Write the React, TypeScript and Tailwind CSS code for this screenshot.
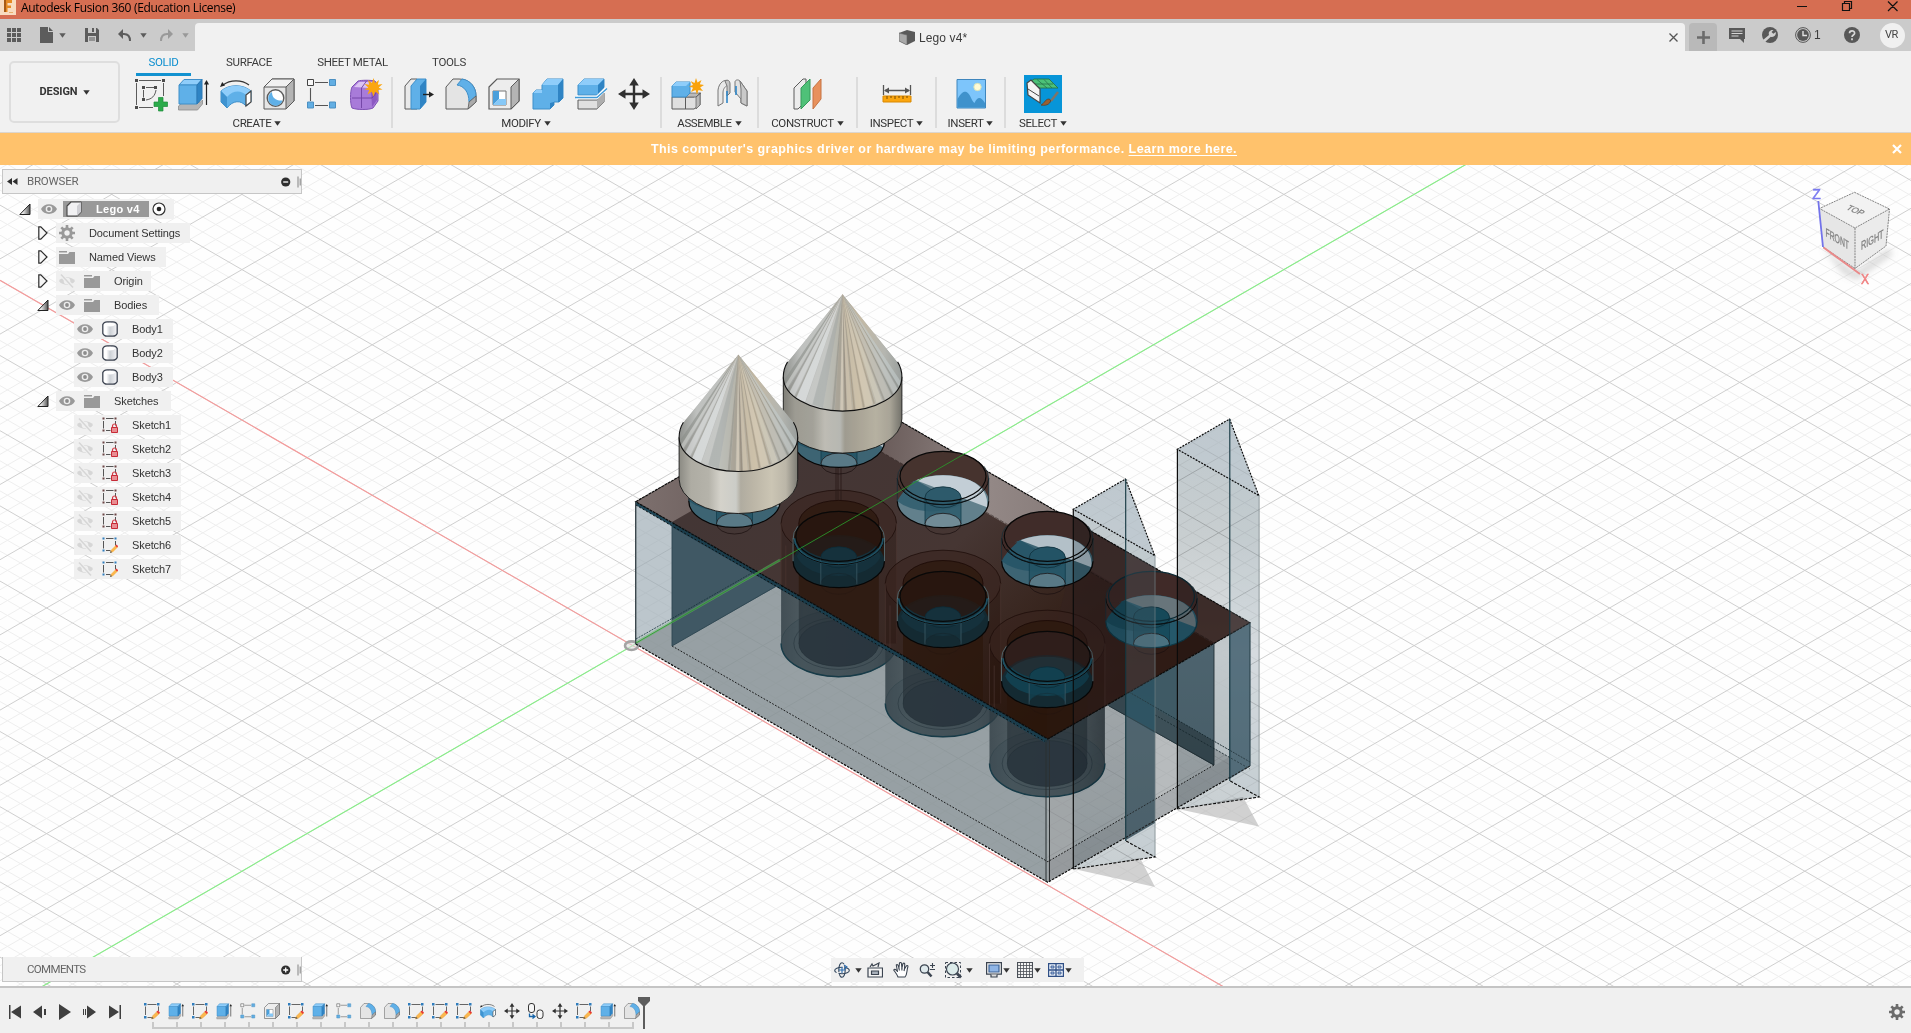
import React from "react";

/* ------------------------------------------------------------------ */
/* Shared small glyphs                                                  */
/* ------------------------------------------------------------------ */

function Caret({ className = "text-[#333]" }: { className?: string }) {
  return (
    <svg width="7" height="5" viewBox="0 0 7 5" className={className}>
      <path d="M0.3 0.3h6.4L3.5 4.8z" fill="currentColor" />
    </svg>
  );
}

type IconName =
  | "sketch" | "extrude" | "revolve" | "hole" | "pattern" | "form"
  | "presspull" | "fillet" | "shell" | "combine" | "split" | "move"
  | "component" | "joint" | "plane" | "measure" | "insert" | "select"
  | "editSketch" | "copy";

const INK = "#5b5b5b";

const ART: Record<IconName, React.ReactNode> = {
  sketch: (
    <g>
      <path d="M5 2.5h22M2.500 5v22M29.500 5v13M5 29.500h14" fill="none" stroke={INK} />
      <path d="M9.500 19.500V12M12 9.500h8M12 22c6-1 9-4 10-10" fill="none" stroke={INK} />
      <path d="M1 1h3v3H1zM28 1h3v3h-3zM1 28h3v3H1zM8 8h3v3H8zM20 8h3v3h-3zM8 20h3v3H8z" fill="#4c4c4c" />
      <path d="M24.5 19.5h4.500v4.500h4.500v4.500h-4.500v4.500h-4.500v-4.500h-4.500v-4.500h4.500z" fill="#2bab4b" stroke="#1d8c39" strokeWidth=".7" />
    </g>
  ),
  extrude: (
    <g>
      <path d="M1.5 28l5-4h17l2-2v4l-5 6h-19z" fill="#b5b5b5" stroke="#8d8d8d" strokeWidth=".8" />
      <path d="M2 7l5-5.500h18L20 7z" fill="#8fcdfa" stroke="#3f8fc9" />
      <path d="M2 7h18v19H2z" fill="#5fb0e8" stroke="#3f8fc9" />
      <path d="M20 7l5-5.500v19L20 26z" fill="#2f84c4" stroke="#2c79b5" />
      <path d="M29.5 27V5" stroke="#222" strokeWidth="1.2" />
      <path d="M27 6.5l2.500-4.500 2.500 4.500z" fill="#222" />
    </g>
  ),
  revolve: (
    <g>
      <path d="M3 7C10 1.5 22 1.5 29 7" fill="none" stroke="#333" strokeWidth="1.2" />
      <path d="M0 9l2.200-5 2.800 3.600z" fill="#222" />
      <path d="M1 13C9 6 23 6 31 13v11l-5 4c-5-6-13-6-19 2l-6-6z" fill="#5fb0e8" stroke="#3f8fc9" />
      <path d="M1 13C9 6 23 6 31 13l-5 4c-5-5-13-5-19 2z" fill="#8fcdfa" />
      <path d="M1 13l6 6v11l-6-6z" fill="#3f93d0" />
      <path d="M26 17l5-4v11l-5 4z" fill="#fff" stroke="#444" strokeWidth="1.2" />
    </g>
  ),
  hole: (
    <g>
      <path d="M1 9l8-8h22v22l-8 8H1z" fill="#e6e6e6" stroke={INK} />
      <path d="M23 9l8-8v22l-8 8z" fill="#b4b4b4" stroke={INK} />
      <path d="M1 9l8-8h22l-8 8z" fill="#f1f1f1" stroke={INK} />
      <circle cx="12.5" cy="20" r="8.3" fill="#fff" stroke={INK} strokeWidth="1.4" />
      <path d="M9 14c0 6 4 9 10.500 8.500A7.300 7.300 0 1 1 9 14z" fill="#5fb0e8" />
    </g>
  ),
  pattern: (
    <g>
      <path d="M9 4.5h13M4.500 10v13M9 27.500h13" stroke="#555" strokeWidth="1.1" />
      <path d="M1.5 1.5h6v6h-6z" fill="#f8f8f8" stroke="#444" />
      <path d="M23.5 1.5h6v6h-6zM1.500 24h6v6h-6zM23.500 24h6v6h-6z" fill="#62aee3" stroke="#4c90c2" />
    </g>
  ),
  form: (
    <g>
      <path d="M3 9l6-6c3-1 13-1 17 0l3 5v15l-5 7c-4 2-16 2-21 0-2-4-2-17 0-21z" fill="#a87bd9" stroke="#7e50b4" />
      <path d="M5 9l5-5h14l-4 6z" fill="#dcc4f3" />
      <path d="M22 11l5-6 1 17-5 7z" fill="#8c59c2" />
      <path d="M3 20h20l5-6M12.500 10v20M12.500 10l5-7" fill="none" stroke="#6f42a3" strokeWidth=".9" />
      <path d="M24.5 0l1.500 5 4-3-1.200 4.800 4.700-.8-3.800 3.500 3.800 2-4.700.6 1.700 4.400-4.300-2.700-1.700 4.700-1.700-4.700-4.300 2.700 1.700-4.400-4.700-.6 3.800-2-3.800-3.500 4.700.8L19 2l4 3z" fill="#fba60f" />
    </g>
  ),
  presspull: (
    <g>
      <path d="M3 8l6-7h6v30H3z" fill="#e9e9e9" stroke={INK} />
      <path d="M9 8l6-7h9v23l-6 7H9z" fill="#5fb0e8" stroke="#3f8fc9" />
      <path d="M18 8l6-7v23l-6 7z" fill="#2f84c4" />
      <path d="M21 16.5h7" stroke="#222" strokeWidth="1.4" />
      <path d="M27 13.5l5 3-5 3z" fill="#222" />
    </g>
  ),
  fillet: (
    <g>
      <path d="M1 31V9l7-8h6C24 1 31 8 31 18v6l-8 7z" fill="#e4e4e4" stroke={INK} />
      <path d="M12 7l5-6c8 1 14 8 14 17l-7 6c0-10-5-16-12-17z" fill="#5fb0e8" stroke="#3f8fc9" />
      <path d="M24 24l7-6v6l-8 7z" fill="#ababab" stroke={INK} strokeWidth=".8" />
    </g>
  ),
  shell: (
    <g>
      <path d="M1 9l8-8h22v22l-8 8H1z" fill="#ededed" stroke={INK} strokeWidth="1.2" />
      <path d="M23 9l8-8v22l-8 8z" fill="#b4b4b4" stroke={INK} />
      <path d="M5 13h13v14H5z" fill="#fff" stroke="#777" />
      <path d="M5 13h6v8l-6 6z" fill="#4a9fdb" />
      <path d="M5 27l6-6h7v6z" fill="#86c8f7" />
    </g>
  ),
  combine: (
    <g>
      <path d="M1 15l3-3h6V7l5-6h16v19l-4 4h-5v3l-4 4H1z" fill="#5fb0e8" stroke="#3f8fc9" />
      <path d="M10 7l5-6h16l-5 6zM1 15l3-3h6v3z" fill="#8fcdfa" />
      <path d="M26 7l5-6v19l-4 4h-1zM18 25l4-1v3l-4 4z" fill="#2f84c4" />
    </g>
  ),
  split: (
    <g>
      <path d="M3 22h19l7-7v9l-7 7H3z" fill="#e0e0e0" stroke={INK} />
      <path d="M22 22l7-7v9l-7 7z" fill="#aeaeae" />
      <path d="M3 7l6-6h20v10l-6 6H3z" fill="#5fb0e8" stroke="#3f8fc9" />
      <path d="M3 7l6-6h20l-6 6z" fill="#8fcdfa" />
      <path d="M23 7l6-6v10l-6 6z" fill="#2f84c4" />
      <path d="M1 19.500h21l9-9" fill="none" stroke="#fff" strokeWidth="3.5" />
      <path d="M0 19.500h22l10-9" fill="none" stroke="#3f9ad9" strokeWidth="1.4" />
    </g>
  ),
  move: (
    <g fill="#303030">
      <path d="M14.8 6h2.400v20h-2.400zM6 14.800h20v2.400H6z" />
      <path d="M16 0l4.800 7.500h-9.600zM16 32l-4.800-7.500h9.600zM0 16l7.500-4.800v9.600zM32 16l-7.500 4.800v-9.600z" />
    </g>
  ),
  component: (
    <g>
      <path d="M1 19h22l6-4v12l-6 4H1z" fill="#dfdfdf" stroke={INK} />
      <path d="M15 19l4-4h11l-5 4zM25 19l4-4v12l-4 4z" fill="#b9b9b9" stroke={INK} strokeWidth=".7" />
      <path d="M14.5 19v12" stroke={INK} />
      <path d="M1 8l4-4h14v11l-4 4H1z" fill="#5fb0e8" stroke="#3f8fc9" />
      <path d="M1 8l4-4h14l-4 4z" fill="#8fcdfa" />
      <path d="M25 0l1.500 4.500 4-2.500-1.700 4.200 4.200.8-3.800 2.500 2.800 3.500-4.500-1L26 16.500l-1.500-4.500-4.500 2 2-4.200-4-1.300 4-1.500-2.500-4 4 2z" fill="#f9a30d" />
    </g>
  ),
  joint: (
    <g stroke="#777">
      <path d="M2 28V12C3 4 9 1 12 3v4c-4 2-5 5-5 8v10z" fill="#e8e8e8" />
      <path d="M9 3c3-2 5 0 5 3v9l-3 3V8z" fill="#c6c6c6" />
      <path d="M31 28V13l-7-10c-2-2-5-1-5 1v10l6 7v4z" fill="#e2e2e2" />
      <path d="M24 3l7 10v15l-6-3V11z" fill="#c9c9c9" />
      <path d="M11 13v12M20 8v9" stroke="#2e86c8" strokeWidth="1.6" />
    </g>
  ),
  plane: (
    <g>
      <path d="M2 10l9-9h3v22l-8 8H2z" fill="#ececec" stroke={INK} />
      <path d="M9 10l9-9v21l-9 9z" fill="#4fc178" stroke="#37995a" />
      <path d="M21 10l8-9v20l-8 10z" fill="#e8915c" stroke="#c67343" />
    </g>
  ),
  measure: (
    <g>
      <path d="M2.5 7v10M29.500 7v10M4 12.500h24" stroke="#555" strokeWidth="1.3" fill="none" />
      <path d="M3 12.5l5-3v6zM29 12.500l-5-3v6z" fill="#555" />
      <path d="M2 18h28v6H2z" fill="#fba60f" stroke="#d98902" />
      <path d="M6 18v3M10 18v2M14 18v3M18 18v2M22 18v3M26 18v2" stroke="#7a4b00" />
    </g>
  ),
  insert: (
    <g>
      <path d="M2 1.5h28.500v28.500H2z" fill="#7dc5fb" stroke="#3f86bd" />
      <path d="M2.5 21c4-7 7-8 9-7 4 2 5 9 8 11 3-6 6-7 10.500 0v4.500H2.500z" fill="#3f92cc" />
      <circle cx="22.5" cy="9" r="3.7" fill="#fffbd5" stroke="#d5e2bb" />
    </g>
  ),
  select: (
    <g>
      <path d="M3 4l4-3h15l9 9H13z" fill="#4cc177" stroke="#27754a" strokeWidth=".9" />
      <path d="M10 1.5l10 8.500M17 1.500l8 8.500M8 6h18" stroke="#27754a" strokeWidth=".8" />
      <path d="M0 5l4-3 9 9v14L1 17z" fill="#f4f4f4" stroke="#444" strokeWidth="1.2" />
      <path d="M1 11l11 7" stroke="#444" />
      <path d="M31 14l-7 9" stroke="#7e7468" strokeWidth="2.4" />
      <path d="M14 27c3-1 4-6 8-6 4 1 0 8-8 6z" fill="#9a6032" stroke="#5d3a20" strokeWidth=".7" />
    </g>
  ),
  editSketch: (
    <g>
      <path d="M7 3h18M29 7v9M3 7v17M7 29h10" fill="none" stroke="#555" strokeWidth="1.8" />
      <path d="M0 0h5v5H0zM26 0h5v5h-5zM0 26h5v5H0z" fill="#2f7dbd" />
      <path d="M15 32l2-6 9-9 5 4-10 9z" fill="#fbb74e" stroke="#e89e35" />
      <path d="M25 17l3-2 4 4-3 3z" fill="#e53737" />
      <path d="M15 32l1.500-4 3 2.500z" fill="#555" />
    </g>
  ),
  copy: (
    <g fill="#f6f6f6" stroke="#333" strokeWidth="2">
      <rect x="1" y="1" width="12" height="18" rx="5" />
      <rect x="18" y="14" width="12" height="17" rx="5" />
      <path d="M3 21v6h10M9 23l5 4-5 4" fill="none" stroke="#1564a8" strokeWidth="2.6" />
    </g>
  ),
};

function Icon({ name, size = 32 }: { name: IconName; size?: number }) {
  return (
    <svg width={size} height={size} viewBox="0 0 32 32" className="block overflow-visible">
      {ART[name]}
    </svg>
  );
}

/* ------------------------------------------------------------------ */
/* Title bar and document tabs                                          */
/* ------------------------------------------------------------------ */

function TitleBar() {
  return (
    <div className="flex h-[19px] items-start justify-between bg-[#d66e52]">
      <div className="flex items-start">
        <svg width="16" height="15" viewBox="0 0 16 15">
          <path d="M0 0h16v15H0z" fill="#f8dcc0" />
          <path d="M4 0h8v3H7.500v2.500H11V8H7.500v4H4z" fill="#e58a24" />
          <path d="M4 0h2v12H4z" fill="#a85a14" />
          <path d="M9 12.5h4" stroke="#e9ae6d" />
        </svg>
        <span className="mt-[-1px] ml-[5px] font-['Open_Sans'] text-[12px] leading-[17px] tracking-[-0.32px] text-black">
          Autodesk Fusion 360 (Education License)
        </span>
      </div>
      <svg width="114" height="15" viewBox="0 0 114 15" fill="none" stroke="#111" strokeWidth="1.2">
        <path d="M0 6.5h10M45.500 3.500h7v7h-7zM47.500 3.500v-2h7v7h-2M91 1.500l9.500 9.500M100.500 1.500L91 11" />
      </svg>
    </div>
  );
}

function TabStrip() {
  return (
    <div className="flex h-8 bg-[#cbcbcb] pt-1">
      <div className="flex w-[195px] items-center pb-1 pl-[7px] text-[#5c5c5c]">
        <svg width="14" height="14" viewBox="0 0 14 14" fill="currentColor">
          <path d="M0 0h4v4H0zM5 0h4v4H5zM10 0h4v4h-4zM0 5h4v4H0zM5 5h4v4H5zM10 5h4v4h-4zM0 10h4v4H0zM5 10h4v4H5zM10 10h4v4h-4z" />
        </svg>
        <svg width="13" height="16" viewBox="0 0 13 16" className="ml-[19px]" fill="currentColor">
          <path d="M0 0h8v5h5v11H0zM9 0l4 4H9z" />
        </svg>
        <span className="ml-[6px]"><Caret className="text-[#5c5c5c]" /></span>
        <svg width="14" height="14" viewBox="0 0 14 14" className="ml-[19px]" fill="currentColor">
          <path fillRule="evenodd" d="M0 0h12l2 2v12H0zM3 0v5h8V0H9v4H7V0zM3 8v6h8V8zM4 9.500h6v1H4zM4 11.500h6v1H4z" />
        </svg>
        <svg width="13" height="13" viewBox="0 0 13 13" className="ml-[19px]" fill="none">
          <path d="M2 5h4c4 0 6 2.500 6 7" stroke="currentColor" strokeWidth="2" />
          <path d="M0 5l5-5v10z" fill="currentColor" />
        </svg>
        <span className="ml-[9px]"><Caret className="text-[#5c5c5c]" /></span>
        <svg width="13" height="13" viewBox="0 0 13 13" className="ml-[13px] text-[#999]" fill="none">
          <path d="M11 5H7C3 5 1 7.500 1 12" stroke="currentColor" strokeWidth="2" />
          <path d="M13 5L8 0v10z" fill="currentColor" />
        </svg>
        <span className="ml-[9px]"><Caret className="text-[#999]" /></span>
      </div>
      <div className="flex w-[1490px] items-center rounded-t bg-[#f1f1f1] pl-[704px]">
        <svg width="16" height="15" viewBox="0 0 16 15">
          <path d="M0 3l8-3 8 2v9l-8 4-8-4z" fill="#5a5a5a" />
          <path d="M0 3l8 2v10l-8-4z" fill="#a9a9a9" stroke="#666" strokeWidth=".6" />
        </svg>
        <span className="ml-1 flex-1 pt-px text-[12px] leading-4 tracking-[0.1px] text-[#3c3c3c]">Lego v4*</span>
        <svg width="9" height="9" viewBox="0 0 9 9" className="mr-[7px]" stroke="#555" strokeWidth="1.3">
          <path d="M.5.5l8 8M8.500.5l-8 8" />
        </svg>
      </div>
      <div className="ml-1 flex w-7 items-center justify-center rounded-t bg-[#b9b9b9]">
        <svg width="13" height="13" viewBox="0 0 13 13" stroke="#6c6c6c" strokeWidth="2.6"><path d="M6.5 0v13M0 6.500h13" /></svg>
      </div>
      <div className="flex flex-1 items-center pb-1 pl-3 text-[#585858]">
        <svg width="16" height="15" viewBox="0 0 16 15">
          <path d="M0 0h16v11h-1v4l-4-4H0z" fill="currentColor" />
          <path d="M2.5 3h11M2.500 5.500h11M2.500 8h7" stroke="#d4d4d4" />
        </svg>
        <svg width="16" height="16" viewBox="0 0 16 16" className="ml-[17px]">
          <circle cx="8" cy="8" r="8" fill="currentColor" />
          <path d="M1 13l6-5c-1-3 1-5.500 4.500-5L9.500 5l1.800 1.800L13.800 5c.5 3.500-2 5.500-5 4.700L3 15z" fill="#d0d0d0" />
        </svg>
        <svg width="16" height="16" viewBox="0 0 16 16" className="ml-[17px]">
          <circle cx="8" cy="8" r="7.4" fill="none" stroke="currentColor" />
          <circle cx="8" cy="8" r="5.9" fill="currentColor" />
          <path d="M8 4v4.500h4" fill="none" stroke="#e2e2e2" strokeWidth="1.4" />
        </svg>
        <span className="ml-[3px] w-[8px] text-[12px] leading-4 text-[#3d3d3d]">1</span>
        <svg width="16" height="16" viewBox="0 0 16 16" className="ml-[22px]">
          <circle cx="8" cy="8" r="8" fill="currentColor" />
          <path d="M5.5 6.300C5.500 3 10.600 3 10.600 6.200 10.600 8 8 8 8 10M8 11.300v2" fill="none" stroke="#d8d8d8" strokeWidth="1.7" />
        </svg>
        <span className="ml-5 flex size-[25px] items-center justify-center rounded-full bg-[#f0f0f0] pr-[2px] font-['Roboto'] text-[11px] tracking-[-0.5px] text-[#444]">VR</span>
      </div>
    </div>
  );
}

/* ------------------------------------------------------------------ */
/* Ribbon                                                               */
/* ------------------------------------------------------------------ */

function Group({ icons, label, width, last, step = "w-[43px]" }: { icons: IconName[]; label: string; width: string; last?: boolean; step?: string }) {
  return (
    <div className={`flex h-[51px] flex-col items-center ${width} ${last ? "" : "border-r-2 border-[#dcdcdc]"}`}>
      <div className="mt-[-2px] flex h-[38px] shrink-0 items-center">
        {icons.map((n) => (
          <div key={n} className={`flex justify-center ${step}`}>
            {n === "select" ? (
              <div className="flex size-[38px] items-center justify-center bg-[#0795d8]"><Icon name={n} /></div>
            ) : (
              <Icon name={n} />
            )}
          </div>
        ))}
      </div>
      <div className="mt-[3px] flex shrink-0 items-center gap-[3px] font-['Roboto'] text-[11.5px] leading-[14px] tracking-[-0.4px] text-[#333]">
        {label}
        <Caret />
      </div>
    </div>
  );
}

function Ribbon() {
  return (
    <div className="flex h-[82px] border-b border-[#dcd6cf] bg-[#f1f1f1] pl-[9px]">
      <div className="mt-[10px] flex h-[62px] w-[111px] items-center justify-center gap-[5px] rounded-[5px] border-2 border-[#dedede] font-['Roboto'] text-[11px] font-bold tracking-[-0.1px] text-[#333]">
        DESIGN
        <Caret />
      </div>
      <div className="flex flex-col">
        <div className="flex h-[26px] pl-4 font-['Roboto'] text-[11.5px] leading-[22px] tracking-[-0.35px] text-[#3c3c3c]">
          <div className="h-[25px] w-[55px] border-b-[3px] border-[#1292d0] text-center text-[#0e8fcf]">SOLID</div>
          <div className="w-[116px] text-center">SURFACE</div>
          <div className="w-[91px] text-center">SHEET METAL</div>
          <div className="w-[102px] text-center">TOOLS</div>
        </div>
        <div className="flex">
          <Group width="w-[273px] pl-[3px]" label="CREATE" icons={["sketch", "extrude", "revolve", "hole", "pattern", "form"]} />
          <Group width="w-[269px] pr-[1px]" label="MODIFY" icons={["presspull", "fillet", "shell", "combine", "split", "move"]} step="w-[43.4px]" />
          <Group width="w-[97px]" label="ASSEMBLE" icons={["component", "joint"]} step="w-[45px]" />
          <Group width="w-[99px]" label="CONSTRUCT" icons={["plane"]} />
          <Group width="w-[79px]" label="INSPECT" icons={["measure"]} />
          <Group width="w-[69px]" label="INSERT" icons={["insert"]} />
          <Group width="w-[74px]" label="SELECT" icons={["select"]} last />
        </div>
      </div>
    </div>
  );
}

function Banner() {
  return (
    <div className="flex h-8 items-center bg-[#ffc26c] text-white">
      <div className="w-[1888px] text-center text-[12.5px] font-bold tracking-[0.44px]">
        This computer's graphics driver or hardware may be limiting performance.{" "}
        <span className="underline underline-offset-2">Learn more here.</span>
      </div>
      <svg width="10" height="10" viewBox="0 0 10 10" className="ml-[4px]" stroke="#fff" strokeWidth="2.2"><path d="M1 1l8 8M9 1L1 9" /></svg>
    </div>
  );
}

/* ------------------------------------------------------------------ */
/* 3D viewport drawing, in window coordinates                           */
/* ------------------------------------------------------------------ */

const K = 0.5774;
const OX = 632.6;
const OY = 645.6;

function gridPath(major: boolean) {
  let d = "";
  for (let n = -150; n <= 150; n++) {
    if ((n % 5 === 0) !== major) continue;
    const off = n * 15.04;
    const a = OY + off - K * OX;
    const b = OY + off + K * OX;
    d += `M0 ${a.toFixed(1)}L1911 ${(a + K * 1911).toFixed(1)}M0 ${b.toFixed(1)}L1911 ${(b - K * 1911).toFixed(1)}`;
  }
  return d;
}

function Tube({ cx, cy }: { cx: number; cy: number }) {
  const b = cy + 120;
  return (
    <g>
      <path d={`M${cx - 57.7} ${cy}V${b}A57.7 33.3 0 0 0 ${cx + 57.7} ${b}V${cy}z`} fill="url(#tubeWall)" />
      <ellipse cx={cx} cy={b} rx="57.7" ry="33.3" fill="#3a4a52" fillOpacity=".35" stroke="#22363e" strokeOpacity=".4" strokeWidth=".7" />
      <ellipse cx={cx} cy={b} rx="45" ry="26" fill="none" stroke="#22303a" strokeOpacity=".7" strokeWidth=".7" />
      <path d={`M${cx - 40} ${cy}V${b}A40 23 0 0 0 ${cx + 40} ${b}V${cy}z`} fill="#232d33" fillOpacity=".6" />
      <ellipse cx={cx} cy={b} rx="40" ry="23" fill="#25323b" fillOpacity=".5" stroke="#1b272e" strokeOpacity=".5" strokeWidth=".6" />
      <path d={`M${cx - 57.7} ${b}A57.7 33.3 0 0 0 ${cx + 57.7} ${b}`} fill="none" stroke="#173b48" strokeWidth="1.4" />
    </g>
  );
}

function TubeShade({ cx, cy }: { cx: number; cy: number }) {
  return (
    <g>
      <path d={`M${cx - 57.7} ${cy}A57.7 33.3 0 0 1 ${cx + 57.7} ${cy}V${cy + 120}H${cx - 57.7}z`} fill="#230f08" fillOpacity=".32" />
      <ellipse cx={cx} cy={cy} rx="57.7" ry="33.3" fill="#442e29" fillOpacity=".4" stroke="#200f0b" strokeWidth=".8" />
      <path d={`M${cx - 40} ${cy}A40 23 0 0 1 ${cx + 40} ${cy}V${cy + 120}H${cx - 40}z`} fill="#2b170c" fillOpacity=".7" />
      <ellipse cx={cx} cy={cy} rx="40" ry="23" fill="none" stroke="#1a0905" strokeWidth=".8" />
      <path d={`M${cx - 57.7} ${cy}V${cy + 120}M${cx + 57.7} ${cy}V${cy + 120}M${cx - 53} ${cy + 22}V${cy + 120}`} stroke="#4a3530" strokeWidth=".7" fill="none" />
    </g>
  );
}

function Stud({ cx, cy, kind }: { cx: number; cy: number; kind: "light" | "mixed" | "teal" | "dark" | "darkTeal" }) {
  const t = cy - 25;
  const body = { light: "#62808c", mixed: "#3d6473", teal: "#25586a", dark: "#142a32", darkTeal: "#142a32" }[kind];
  const floor = { light: "#2d5a6b", mixed: "#235365", teal: "#164959", dark: "#15313c", darkTeal: "#12404f" }[kind];
  const sheen = { light: "#c3ced6", mixed: "#b3c0c8", teal: "#68757b", dark: "", darkTeal: "" }[kind];
  const top = { light: "#46332f", mixed: "#402c29", teal: "#402a28", dark: "#28170f", darkTeal: "#2f1e1b" }[kind];
  const back = kind === "light" || kind === "mixed" || kind === "teal";
  return (
    <g>
      <path d={`M${cx - 45.7} ${t + 2}V${cy}A45.7 26.4 0 0 0 ${cx + 45.7} ${cy}V${t + 2}A43 25 0 0 0 ${cx - 45.7} ${t + 2}z`} fill={top} />
      <ellipse cx={cx} cy={t} rx="43" ry="25" fill={top} fillOpacity=".9" />
      <path d={`M${cx - 45.7} ${cy}A45.7 26.4 0 0 1 ${cx + 45.7} ${cy}A45.7 26.4 0 0 1 ${cx - 45.7} ${cy}z`} fill={body} />
      {back && (
        <g>
          <path d={`M${cx - 27} ${cy - 21}Q${cx} ${cy - 31} ${cx + 27} ${cy - 21}Q${cx + 46} ${cy - 12} ${cx + 44} ${cy + 6}z`} fill={sheen} />
          <path d={`M${cx - 45.7} ${cy}A45.7 26.4 0 0 1 ${cx - 27} ${cy - 21}L${cx + 17} ${cy + 4}A43 25 0 0 1 ${cx - 45.7} ${cy}z`} fill={floor} fillOpacity=".8" />
          <path d={`M${cx - 45.7} ${t + 7}L${cx - 45.7} ${cy}Q${cx - 43} ${t + 18} ${cx - 30} ${cy - 19}z`} fill={top} />
        </g>
      )}
      {!back && (
        <path d={`M${cx - 42} ${cy - 5}A43 25 0 0 1 ${cx + 42} ${cy - 5}A43 25 0 0 1 ${cx - 42} ${cy - 5}z`} fill={floor} />
      )}
      {!back && <ellipse cx={cx} cy={t - 1} rx="41.5" ry="24" fill={top} fillOpacity={kind === "dark" ? ".8" : ".5"} />}
      <path d={`M${cx - 18} ${cy - 4}A18 10.5 0 0 1 ${cx + 18} ${cy - 4}V${cy + 23}A18 10.5 0 0 0 ${cx - 18} ${cy + 23}z`} fill={floor} fillOpacity=".85" />
      <path d={`M${cx - 18} ${cy - 4}V${cy + 23}M${cx + 18} ${cy - 4}V${cy + 23}`} stroke={back ? "#123c4b" : "#3c5a64"} strokeWidth=".8" />
      <ellipse cx={cx} cy={cy - 4} rx="18" ry="10.5" fill={floor} stroke="#0c2a35" strokeWidth=".7" />
      <path d={`M${cx - 18} ${cy + 22.5}A18 10.5 0 0 1 ${cx + 18} ${cy + 22.5}Q${cx} ${cy + 30} ${cx - 18} ${cy + 22.5}z`} fill={back ? "#8fa0a8" : "none"} fillOpacity=".35" />
      <ellipse cx={cx} cy={cy + 22.5} rx="18" ry="10.5" fill="none" stroke={back ? "#1b1010" : "#17100e"} strokeOpacity={back ? 0.9 : 0.25} strokeWidth=".8" />
      {!back && (
        <path d={`M${cx - 44.5} ${t + 2}A44.5 26 0 0 0 ${cx + 44.5} ${t + 2}`} fill="none" stroke="#1e5062" strokeWidth="2.4" />
      )}
      <ellipse cx={cx} cy={t} rx="43" ry="25" fill="none" stroke={kind === "teal" ? "#0d2b35" : "#080808"} strokeWidth="1.2" />
      <path d={`M${cx - 45.7} ${t + 2}A45.7 26.4 0 0 0 ${cx + 45.7} ${t + 2}`} fill="none" stroke="#0a0a0a" strokeWidth="1" />
      {back && <path d={`M${cx - 40} ${t + 13}A43 24 0 0 0 ${cx + 40} ${t + 13}`} fill="none" stroke="#0a1418" strokeWidth=".8" />}
      <path d={`M${cx - 45.7} ${t + 3}Q${cx - 46} ${t - 4} ${cx - 41} ${t - 10}M${cx + 45.7} ${t + 3}Q${cx + 46} ${t - 4} ${cx + 41} ${t - 10}M${cx - 45.7} ${t + 2}V${cy}M${cx + 45.7} ${t + 2}V${cy}`} fill="none" stroke={back ? "#1a3038" : "#5c7880"} strokeWidth=".8" />
      <path d={`M${cx - 45.7} ${cy}A45.7 26.4 0 0 0 ${cx + 45.7} ${cy}`} fill="none" stroke={kind === "teal" ? "#0e3a48" : "#060606"} strokeWidth="1.2" />
    </g>
  );
}

/* Radial streaks: position across the base, half-width, colour */
const STREAKS: [number, number, string][] = [
  [-0.96, 0.05, "#8b8d88"], [-0.88, 0.04, "#c9cbc8"], [-0.8, 0.02, "#8f908b"], [-0.72, 0.05, "#d8dbda"],
  [-0.64, 0.015, "#9b9b94"], [-0.56, 0.07, "#e4e8ea"], [-0.43, 0.05, "#c9cbc9"], [-0.32, 0.07, "#a9aeab"],
  [-0.2, 0.05, "#b9bab3"], [-0.12, 0.015, "#93928a"], [-0.07, 0.03, "#a39d90"], [-0.01, 0.02, "#e3d9c6"],
  [0.04, 0.012, "#8b7f71"], [0.09, 0.03, "#d5c8b2"], [0.15, 0.01, "#9f917d"], [0.21, 0.04, "#d3c6ae"],
  [0.27, 0.01, "#a09480"], [0.34, 0.05, "#dcd1bb"], [0.41, 0.01, "#a19884"], [0.48, 0.04, "#d6d0c0"],
  [0.55, 0.012, "#98958a"], [0.62, 0.05, "#c3c2b9"], [0.7, 0.012, "#83857f"], [0.78, 0.05, "#c4c9c8"],
  [0.86, 0.015, "#8d9290"], [0.93, 0.05, "#c3cbcc"],
];

function Cone({ cx, cy, id, shade }: { cx: number; cy: number; id: string; shade: number }) {
  const apex = cy - 83;
  const outline = `M${cx} ${apex}L${cx - 55} ${cy - 15}Q${cx - 59.3} ${cy - 8} ${cx - 59.3} ${cy}A59.3 34.2 0 0 0 ${cx + 59.3} ${cy}Q${cx + 59.3} ${cy - 8} ${cx + 55} ${cy - 15}z`;
  const barrel = `M${cx - 59.3} ${cy}V${cy + 42}A59.3 34.2 0 0 0 ${cx + 59.3} ${cy + 42}V${cy}z`;
  return (
    <g>
      <path d={barrel} fill="url(#metal)" stroke="#161616" strokeWidth=".9" />
      <path d={barrel} fill="#3a3833" fillOpacity={shade} />
      <clipPath id={id}><path d={outline} /></clipPath>
      <g clipPath={`url(#${id})`}>
        <path d={outline} fill="url(#coneBase)" />
        {STREAKS.map(([f, w, c]) => {
          const r = 76;
          const x1 = cx + Math.sin((f - w) * 1.05) * r;
          const x2 = cx + Math.sin((f + w) * 1.05) * r;
          const yb = (x: number) => cy + 38 - Math.abs(x - cx) * 0.35;
          return <path key={f} d={`M${cx} ${apex}L${x1} ${yb(x1)}L${x2} ${yb(x2)}z`} fill={c} fillOpacity=".6" />;
        })}
      </g>
      <path d={`M${cx - 55} ${cy - 15}Q${cx - 59.3} ${cy - 8} ${cx - 59.3} ${cy}A59.3 34.2 0 0 0 ${cx + 59.3} ${cy}Q${cx + 59.3} ${cy - 8} ${cx + 55} ${cy - 15}`} fill="none" stroke="#111" strokeWidth="1.1" />
    </g>
  );
}

function Prism({ dx, dy }: { dx: number; dy: number }) {
  return (
    <g transform={`translate(${dx} ${dy})`}>
      <g className="mix-blend-multiply">
        <path d="M1073.3 509.3L1125.5 479L1154.7 555.5V857L1073.3 869z" fill="url(#prism)" />
      </g>
      <path d="M1125.5 479L1154.7 555.5V857L1126 841z" fill="#a9bfca" fillOpacity=".14" />
      <path d="M1073.3 509.3L1125.5 479L1154.7 555.5z" fill="#c0c9d2" fillOpacity=".5" />
      <g fill="none" stroke="#0b0b0b">
        <path d="M1154.7 555.5L1125.5 479L1073.3 509.3L1154.7 555.5" strokeWidth="1.2" strokeDasharray="2 1.2" />
        <path d="M1073.3 509.3V869" strokeWidth="1.2" />
        <path d="M1125.7 479V841" stroke="#12353f" strokeWidth="1.1" />
        <path d="M1155 555V857" stroke="#6d7b80" strokeWidth=".8" />
        <path d="M1073.3 869L1155 857L1126 841" strokeWidth="1.1" strokeDasharray="3 1.5" />
      </g>
    </g>
  );
}

function Brick() {
  return (
    <g>
      {/* cast shadows */}
      <path d="M1074 869L1155 887L1140 858z" fill="#b9b9b9" fillOpacity=".65" />
      <path d="M1178 809L1259 826.5L1243 797z" fill="#b9b9b9" fillOpacity=".65" />

      {/* front face and the floor behind it */}
      <path d="M635.7 501.7L1047.8 739V882.3L635.7 644z" fill="#9aa8b2" fillOpacity=".66" />
      <path d="M635.7 644L672 623V645L780 584L1047.8 739V882.3z" fill="#7c8587" fillOpacity=".58" />
      <path d="M672 522L780 584.5L672 646z" fill="#405864" />

      {/* right face, inner walls and rim */}
      <path d="M1047.8 739L1250 622.7V766L1047.8 882.3z" fill="#92989b" fillOpacity=".66" />
      <path d="M1047.8 861.7L1250 745V766L1047.8 882.3z" fill="#6c7376" fillOpacity=".2" />
      <path d="M1047.8 739L1074 724V867L1047.8 882.3z" fill="#555b5e" fillOpacity=".22" />
      <path d="M1107 705L1214 643.5V765.5z" fill="#58707b" />
      <path d="M1107 705L1129 692L1214 741.5V765.5z" fill="#3d5058" />
      <path d="M1214 643L1229.5 634V757L1214 748z" fill="#eef1f3" fillOpacity=".75" />
      <path d="M1229.5 634L1250 622.7V766L1229.5 779z" fill="#557280" />
      <path d="M1126 694L1155 677V823L1126 840z" fill="#4b626c" />
      <path d="M1126 694L1155 677V733L1126 716z" fill="#1f4c5c" />
      <path d="M1155 677L1177.3 664.5V721L1155 708z" fill="#3f5a65" />

      {/* tubes under the deck */}
      <Tube cx={838.8} cy={523.4} />
      <Tube cx={943} cy={583.5} />
      <Tube cx={1047.2} cy={643.5} />

      {/* deck */}
      <clipPath id="deck"><path d="M635.7 501.7L837.9 385.4L1250 622.7L1047.8 739z" /></clipPath>
      <g clipPath="url(#deck)">
        <path d="M600 380h700v380H600z" fill="url(#deckFill)" />
        <path d="M635.7 501.7L837.9 385.4L1073 520.8V563L838 427L672 522z" fill="url(#deckEdge)" />
        <path d="M1073 520L1250 622.7L1214 644L1073 562z" fill="#4e3836" fillOpacity=".85" />
        <path d="M1073 560L1214 643L1047 739V660z" fill="#34211f" fillOpacity=".5" />
        <TubeShade cx={838.8} cy={523.4} />
        <TubeShade cx={943} cy={583.5} />
        <TubeShade cx={1047.2} cy={643.5} />
        <path d="M1074 500h81V760h-81z" fill="#452c2a" fillOpacity=".3" />
        <path d="M838 427V500M841 429V500M836 427V500" stroke="#2a1b19" strokeWidth=".9" />
        <path d="M838 427L1214 643" stroke="#1d1211" strokeWidth=".7" strokeOpacity=".7" strokeDasharray="4 1.5" />
      </g>

      {/* hem along the front top edge */}
      <path d="M635.7 501.7L1047.8 739L1045 742.5L635.7 505z" fill="#1f4657" />
      <path d="M672 522L1047 739V742.5L672 527z" fill="#193c4b" fillOpacity=".9" />

      {/* edges */}
      <g fill="none" stroke="#0c0c0c" strokeWidth="1.2">
        <path d="M635.7 501.7L837.9 385.4L1250 622.7L1047.8 739z" strokeDasharray="3 .7" />
        <path d="M635.7 505L1045 741.5" strokeDasharray="2 2" strokeWidth=".9" />
        <path d="M635.7 501.7V644" strokeWidth="1.4" stroke="#3b474d" />
        <path d="M635.7 644L1047.8 882.3L1250 766" strokeDasharray="2.5 1.2" />
        <path d="M1046 740V882M1049.5 740V881" stroke="#2b3032" strokeWidth="1" />
        <path d="M672 646L1047.8 861.7L1214 765" strokeWidth=".9" strokeDasharray="1.8 1.5" />
        <path d="M1109 706L1214 765V643" stroke="#26343a" strokeWidth=".9" />
        <path d="M672 522V646L780 584" stroke="#2c4550" strokeWidth=".9" />
        <path d="M1129 692L1250 762" stroke="#16292f" strokeWidth=".9" strokeDasharray="2 1" />
        <path d="M1155 715L1250 769" stroke="#16292f" strokeWidth=".8" strokeDasharray="2 1.5" />
        <path d="M1250 622.7V766" stroke="#1d3943" />
      </g>

      <Stud cx={839} cy={441} kind="mixed" />
      <Stud cx={734.5} cy={501} kind="mixed" />
      <Stud cx={943} cy={501.3} kind="light" />
      <Stud cx={1047.3} cy={561.3} kind="mixed" />
      <Stud cx={1151.5} cy={621.3} kind="teal" />
      <Stud cx={838.8} cy={561.3} kind="dark" />
      <Stud cx={943} cy={621.3} kind="dark" />
      <Stud cx={1047.2} cy={681.3} kind="darkTeal" />

      {/* green axis seen through the body */}
      <path d="M636 642.500L780 560" stroke="#69b06c" strokeWidth="2.6" strokeOpacity=".5" />
      <path d="M636 639L757 570" stroke="#17343a" strokeWidth=".8" strokeDasharray="2 1" />
      <path d="M636 643L965 453.500" stroke="#2a9a2b" strokeWidth="1" strokeOpacity=".85" />

      <Cone cx={842.6} cy={376.9} id="coneB" shade={0.14} />
      <Cone cx={738.4} cy={437.3} id="coneA" shade={0} />

      <Prism dx={0} dy={0} />
      <Prism dx={104.1} dy={-60} />
    </g>
  );
}

function ViewCube() {
  return (
    <g>
      <path d="M1822 247l33 25 34-24 4 6-36 26-14-6z" fill="#888" fillOpacity=".3" filter="url(#soft)" />
      <path d="M1854.5 192.3L1889.5 209L1855 228L1819.5 208.5z" fill="#f2f2f2" />
      <path d="M1819.5 208.5L1855 228V268.5L1823 247z" fill="#e6e6e6" />
      <path d="M1855 228L1889.5 209L1886 246L1855 268.5z" fill="#ebebeb" />
      <path d="M1854.5 192.3L1889.5 209L1855 228L1819.5 208.5zM1855 228V268.5L1886 246L1889.5 209M1855 268.5L1823 247" fill="none" stroke="#777" strokeWidth=".9" strokeDasharray="2 .8" />
      <g fontFamily="Liberation Sans" fill="#808080" stroke="#808080" strokeWidth=".3">
        <text fontSize="11" transform="matrix(.7 .3 -.6 .55 1845.5 209)">TOP</text>
        <text fontSize="11" transform="matrix(.62 .36 0 1.08 1825.5 236)">FRONT</text>
        <text fontSize="11" transform="matrix(.66 -.36 0 1.08 1861 250)">RIGHT</text>
      </g>
      <path d="M1818.3 201L1823 247" stroke="#7373ea" strokeWidth="1.8" />
      <path d="M1823.5 247.5L1860 274" stroke="#ea8a8a" strokeWidth="2" />
      <g fontFamily="Liberation Sans" fontSize="14">
        <text x="1812.3" y="199" fill="#7a7af0" stroke="#7a7af0" strokeWidth=".5">Z</text>
        <text x="1861" y="283.5" fontSize="14" fill="#f08080" stroke="#f08080" strokeWidth=".5" textLength="8" lengthAdjust="spacingAndGlyphs">X</text>
      </g>
    </g>
  );
}

function Scene() {
  return (
    <svg className="absolute inset-0" width="1911" height="821" viewBox="0 165 1911 821">
      <defs>
        <linearGradient id="metal">
          <stop offset="0" stopColor="#8b8a83" /><stop offset=".1" stopColor="#aeaca3" /><stop offset=".25" stopColor="#b5b3aa" />
          <stop offset=".35" stopColor="#d4d2ca" /><stop offset=".48" stopColor="#cbccc7" /><stop offset=".52" stopColor="#b0aca0" />
          <stop offset=".62" stopColor="#bbb5a6" /><stop offset=".78" stopColor="#cbc5b4" /><stop offset=".9" stopColor="#bbb6a8" /><stop offset="1" stopColor="#7c7b74" />
        </linearGradient>
        <linearGradient id="coneBase">
          <stop offset="0" stopColor="#8f918d" /><stop offset=".15" stopColor="#bfc1bf" /><stop offset=".35" stopColor="#c0c2bf" />
          <stop offset=".5" stopColor="#aea99c" /><stop offset=".65" stopColor="#c3b9a5" /><stop offset=".85" stopColor="#b5b6b0" /><stop offset="1" stopColor="#999e9c" />
        </linearGradient>
        <linearGradient id="tubeWall">
          <stop offset="0" stopColor="#2d3a41" stopOpacity=".8" /><stop offset=".2" stopColor="#3c494f" stopOpacity=".8" />
          <stop offset=".8" stopColor="#333f45" stopOpacity=".8" /><stop offset="1" stopColor="#283238" stopOpacity=".85" />
        </linearGradient>
        <linearGradient id="prism" x1="0" y1="0" x2="0" y2="1">
          <stop offset="0" stopColor="#bfc9ce" /><stop offset=".3" stopColor="#c9cfd1" /><stop offset=".6" stopColor="#dde1e3" />
          <stop offset="1" stopColor="#c9d0d3" />
        </linearGradient>
        <linearGradient id="deckFill" gradientUnits="userSpaceOnUse" x1="760" y1="440" x2="1060" y2="740">
          <stop offset="0" stopColor="#433635" /><stop offset=".5" stopColor="#463633" /><stop offset="1" stopColor="#2a150a" />
        </linearGradient>
        <linearGradient id="deckEdge" gradientUnits="userSpaceOnUse" x1="636" y1="500" x2="1073" y2="540">
          <stop offset="0" stopColor="#7d706e" /><stop offset=".45" stopColor="#5b4c4a" /><stop offset=".8" stopColor="#938886" /><stop offset="1" stopColor="#857977" />
        </linearGradient>
        <filter id="soft"><feGaussianBlur stdDeviation="3" /></filter>
      </defs>
      <path d="M0 165h1911v821H0z" fill="#fefefe" />
      <path d={gridPath(false)} stroke="#eeeeee" strokeWidth="1" fill="none" />
      <path d={gridPath(true)} stroke="#cfcfcf" strokeWidth="1" fill="none" />
      <path d={`M0 ${OY - K * OX}L1911 ${OY + K * (1911 - OX)}`} stroke="#f69a9a" strokeWidth="1.1" />
      <path d={`M0 ${OY + K * OX}L1911 ${OY - K * (1911 - OX)}`} stroke="#86f086" strokeWidth="1.1" />
      <ellipse cx="631.5" cy="645.7" rx="6.5" ry="4.3" fill="#ddd" fillOpacity=".6" stroke="#a4a4a4" strokeWidth="2.6" />
      <Brick />
      <ViewCube />
    </svg>
  );
}

/* ------------------------------------------------------------------ */
/* Browser tree                                                         */
/* ------------------------------------------------------------------ */

function Eye({ off }: { off?: boolean }) {
  return off ? (
    <svg width="16" height="14" viewBox="0 0 16 14" className="text-[#d6d6d6]">
      <path d="M0 7c3-5 13-5 16 0-3 5-13 5-16 0z" fill="currentColor" />
      <circle cx="8" cy="7" r="3.3" fill="#f0f0f0" />
      <path d="M2 1l12 12" stroke="#f0f0f0" strokeWidth="3.5" />
      <path d="M2 .5l12 13" stroke="currentColor" strokeWidth="1.5" />
    </svg>
  ) : (
    <svg width="16" height="12" viewBox="0 0 16 12">
      <path d="M0 6c3-6.500 13-6.500 16 0-3 6.500-13 6.500-16 0z" fill="#999" />
      <circle cx="8" cy="6" r="3.3" fill="#ededed" />
      <circle cx="8" cy="6" r="1.9" fill="#8c8c8c" />
    </svg>
  );
}

function Expander({ open }: { open?: boolean }) {
  return open ? (
    <svg width="12" height="12" viewBox="0 0 12 12"><path d="M11 1v10.500H.8z" fill="url(#exp)" stroke="#222" /><defs><linearGradient id="exp"><stop offset=".3" stopColor="#eee" /><stop offset="1" stopColor="#555" /></linearGradient></defs></svg>
  ) : (
    <svg width="10" height="14" viewBox="0 0 10 14"><path d="M.8.8h2l6.200 6.200-6.200 6.200h-2z" fill="#f6f6f6" stroke="#2c2c2c" strokeWidth="1.2" /></svg>
  );
}

function Folder() {
  return (
    <svg width="16" height="13" viewBox="0 0 16 13" fill="#999"><path d="M0 0h8v1.500H0zM0 3h9l1.500-2H16v12H0z" /></svg>
  );
}

function Gear({ color = "#999" }: { color?: string }) {
  return (
    <svg width="16" height="16" viewBox="0 0 16 16" fill="none">
      <circle cx="8" cy="8" r="4.2" stroke={color} strokeWidth="3" />
      <path d="M8 0v3M8 13v3M0 8h3M13 8h3M2.300 2.300l2.200 2.200M11.500 11.500l2.200 2.200M13.700 2.300l-2.200 2.200M4.500 11.500l-2.200 2.200" stroke={color} strokeWidth="2.6" />
    </svg>
  );
}

function BodyIcon() {
  return (
    <svg width="16" height="16" viewBox="0 0 16 16">
      <defs><linearGradient id="bdy"><stop offset=".25" stopColor="#fff" /><stop offset=".5" stopColor="#cdd1d6" /><stop offset="1" stopColor="#f4f4f7" /></linearGradient></defs>
      <path d="M.8 3.500Q2 .8 5 .8h6Q14 .8 15.200 3.500v9Q14 15.200 11 15.200H5Q2 15.200 .8 12.500z" fill="url(#bdy)" stroke="#3c4350" strokeWidth="1.3" />
      <path d="M2.500 3.500Q4 5.500 8 5.500t5.500-2Q12 1.800 8 1.800t-5.500 1.700z" fill="#fff" />
    </svg>
  );
}

function SketchIcon({ locked }: { locked: boolean }) {
  return (
    <svg width="16" height="16" viewBox="0 0 16 16">
      <path d="M4 1.5h7.500M13.500 4v4.500M1.500 4v7.500M4 13.500h4.500" fill="none" stroke="#555" />
      <path d="M0.500 0.500h2v2h-2zM12.500 0.500h2v2h-2zM0.500 12.500h2v2h-2z" fill={locked ? "#6b4545" : "#2f7dbd"} />
      {locked ? (
        <g>
          <path d="M10.5 10.5V9a2 2 0 0 1 4 0v1.500" fill="none" stroke="#d43b45" strokeWidth="1.2" />
          <path d="M9.5 10.5h6v5h-6z" fill="#e98d92" stroke="#c72a36" />
        </g>
      ) : (
        <g>
          <path d="M8 16l1-3 5-5 2 2-5 5z" fill="#fbb74e" />
          <path d="M13.3 8.700l1.200-1.200L16.300 9.300l-1.300 1.200z" fill="#e53737" />
          <path d="M8 16l.7-2.200 1.500 1.400z" fill="#555" />
        </g>
      )}
    </svg>
  );
}

interface Row {
  label: string;
  pad: string;
  width: string;
  expander?: "open" | "closed";
  eye?: "on" | "off";
  icon: "gear" | "folder" | "body" | "locked" | "sketch";
}

const L1 = "pl-[38px]";
const L2 = "pl-[56px]";
const ROWS: Row[] = [
  { label: "Document Settings", pad: L1, width: "w-[134px]", expander: "closed", icon: "gear" },
  { label: "Named Views", pad: L1, width: "w-[110px]", expander: "closed", icon: "folder" },
  { label: "Origin", pad: L1, width: "w-[95px]", expander: "closed", eye: "off", icon: "folder" },
  { label: "Bodies", pad: L1, width: "w-[103px]", expander: "open", eye: "on", icon: "folder" },
  { label: "Body1", pad: L2, width: "w-[99px]", eye: "on", icon: "body" },
  { label: "Body2", pad: L2, width: "w-[99px]", eye: "on", icon: "body" },
  { label: "Body3", pad: L2, width: "w-[99px]", eye: "on", icon: "body" },
  { label: "Sketches", pad: L1, width: "w-[115px]", expander: "open", eye: "on", icon: "folder" },
  { label: "Sketch1", pad: L2, width: "w-[107px]", eye: "off", icon: "locked" },
  { label: "Sketch2", pad: L2, width: "w-[107px]", eye: "off", icon: "locked" },
  { label: "Sketch3", pad: L2, width: "w-[107px]", eye: "off", icon: "locked" },
  { label: "Sketch4", pad: L2, width: "w-[107px]", eye: "off", icon: "locked" },
  { label: "Sketch5", pad: L2, width: "w-[107px]", eye: "off", icon: "locked" },
  { label: "Sketch6", pad: L2, width: "w-[107px]", eye: "off", icon: "sketch" },
  { label: "Sketch7", pad: L2, width: "w-[107px]", eye: "off", icon: "sketch" },
];

function TreeIcon({ icon }: { icon: Row["icon"] }) {
  if (icon === "gear") return <Gear />;
  if (icon === "folder") return <Folder />;
  if (icon === "body") return <BodyIcon />;
  return <SketchIcon locked={icon === "locked"} />;
}

function PanelHandle({ sign }: { sign: "plus" | "minus" }) {
  return (
    <svg width="20" height="12" viewBox="0 0 20 12">
      <circle cx="4.7" cy="6" r="4.6" fill="#2e2e2e" />
      <path d={sign === "plus" ? "M2.2 6h5M4.7 3.5v5" : "M2.2 6h5"} stroke="#fff" strokeWidth="1.3" />
      <path d="M17 .5v11M19.2 2.500v7" stroke="#777" strokeWidth=".9" />
    </svg>
  );
}

function Browser() {
  return (
    <div className="w-[302px] pt-1">
      <div className="ml-[2px] flex h-[25px] items-center border border-[#c6c6c6] bg-[#f0f0f0] pl-1">
        <svg width="11" height="7" viewBox="0 0 11 7" fill="#2e2e2e"><path d="M5 0v7L0 3.500zM10.500 0v7l-5-3.500z" /></svg>
        <span className="ml-[9px] flex-1 font-['Roboto'] text-[11.5px] tracking-[-0.2px] text-[#666]">BROWSER</span>
        <PanelHandle sign="minus" />
      </div>
      <div className="mt-[3px] flex h-6 items-center pl-[19px]">
        <Expander open />
        <div className="ml-[7px] flex h-5 w-[136px] items-center bg-[#f0f0f0] pl-[3px]">
          <Eye />
          <div className="ml-[6px] flex h-4 w-[86px] items-center bg-[#999] pl-[3px]">
            <svg width="16" height="16" viewBox="0 0 16 16"><path d="M1 5l4-4h10v10l-4 4H1z" fill="#f1f1f3" stroke="#444" strokeWidth="1.1" strokeLinejoin="round" /><path d="M11 5l4-4v10l-4 4z" fill="#cfcfd4" /></svg>
            <span className="ml-[14px] text-[11px] font-bold tracking-[0.3px] whitespace-nowrap text-white">Lego v4</span>
          </div>
          <svg width="14" height="14" viewBox="0 0 14 14" className="ml-[3px]"><circle cx="7" cy="7" r="6" fill="#fff" stroke="#333" strokeWidth="1.2" /><circle cx="7" cy="7" r="2.3" fill="#222" /></svg>
        </div>
      </div>
      {ROWS.map((r) => (
        <div key={r.label} className={`flex h-6 items-center ${r.pad}`}>
          <div className="flex w-[18px] shrink-0">
            {r.expander && (
              <span className={r.expander === "open" ? "ml-[-1px]" : ""}><Expander open={r.expander === "open"} /></span>
            )}
          </div>
          <div className={`flex h-5 items-center bg-[#f0f0f0] pl-[3px] ${r.width}`}>
            {r.eye && <span className="mr-[9px] w-4"><Eye off={r.eye === "off"} /></span>}
            <TreeIcon icon={r.icon} />
            <span className="ml-[14px] text-[11px] tracking-[-0.1px] whitespace-nowrap text-[#333]">{r.label}</span>
          </div>
        </div>
      ))}
    </div>
  );
}

/* ------------------------------------------------------------------ */
/* Comments panel and navigation bar                                    */
/* ------------------------------------------------------------------ */

function NavBar() {
  return (
    <div className="flex h-6 w-[253px] items-center bg-[#f0f0f0] pl-[3px]">
      <svg width="16" height="16" viewBox="0 0 16 16" fill="none" stroke="#33475e" strokeWidth="1.1">
        <ellipse cx="8" cy="8" rx="3.2" ry="7.3" strokeDasharray="13 2" /><ellipse cx="8" cy="8.5" rx="7.3" ry="3.2" strokeDasharray="12 2" />
        <path d="M8 5v6M5 8h6M10 3l3 2-3 2" stroke="#2a6cb0" />
      </svg>
      <span className="ml-[5px]"><Caret /></span>
      <svg width="16" height="16" viewBox="0 0 16 16" className="ml-[5px]" fill="#f6f6f6" stroke="#3b4450" strokeWidth="1.2">
        <path d="M1 6h14.500v9H1z" /><path d="M4.5 9h7v3.500h-7z" fill="#a9b1bb" /><path d="M3 5l2-3 1 2 6-3-1 4" fill="none" />
      </svg>
      <svg width="17" height="16" viewBox="0 0 17 16" className="ml-[10px]" fill="#fff" stroke="#3b4450" strokeWidth="1.1" strokeLinejoin="round">
        <path d="M5 15c-1-3-3-5-4.300-7 1-1.300 2.300-.5 3.800 1.500L3.300 3c1-1 1.800-.5 2.600 3L6.500 1c1-1 2-.5 2 1l.4 4L10 1.500c1-.8 1.900-.3 1.700 1L11.500 7l2-3.300c1-.6 1.700.2 1.300 1.300C13.500 9 14.500 12 12 15z" />
        <path d="M5.900 6l.5 2.500M8.900 6v2.500M11.500 7l-.5 2" />
      </svg>
      <svg width="17" height="16" viewBox="0 0 17 16" className="ml-[9px]" fill="none" stroke="#3b4450">
        <circle cx="5.5" cy="7" r="4.2" fill="#dfe9ec" strokeWidth="1.3" /><path d="M8.5 10l4 4.500" strokeWidth="2.6" /><path d="M11 3.5h5M13.500 1v5M11 7.500h5" strokeWidth="1.1" />
      </svg>
      <svg width="17" height="17" viewBox="0 0 17 17" className="ml-[9px]" fill="none" stroke="#3b4450">
        <path d="M.5.5h15v15H.5z" strokeDasharray="2.5 2" /><circle cx="7.5" cy="7" r="6" fill="#dcebea" strokeWidth="1.2" /><path d="M12 11.5l4 4" strokeWidth="2.8" />
      </svg>
      <span className="ml-[4px]"><Caret /></span>
      <svg width="16" height="16" viewBox="0 0 16 16" className="ml-[13px]" fill="none" stroke="#3b4450" strokeWidth="1.2">
        <path d="M.6.6h14.800v11.500H.6z" fill="#f4f4f4" /><path d="M3 3h10v7H3z" fill="#8fb5e6" stroke="#3d6396" /><path d="M5 12.5v2.500h6v-2.500" fill="#ddd" />
      </svg>
      <span className="ml-[1px]"><Caret /></span>
      <svg width="16" height="16" viewBox="0 0 16 16" className="ml-[7px]" fill="#f4f4f4" stroke="#4a4f57">
        <path d="M.5.5h15v15H.5z" strokeWidth="1.2" /><path d="M3.5.5v15M6.500.5v15M9.500.5v15M12.500.5v15M.5 3.500h15M.5 6.500h15M.5 9.500h15M.5 12.500h15" strokeWidth=".8" />
      </svg>
      <span className="ml-[1px]"><Caret /></span>
      <svg width="16" height="14" viewBox="0 0 16 14" className="ml-[7px]" fill="#a9c5ee" stroke="#2f4f86">
        <path d="M.6.6h14.800v12.800H.6z" fill="#e5edf8" strokeWidth="1.2" /><path d="M8 .6v12.800M.6 7h14.800" strokeWidth="1.3" /><path d="M3 3h3v2H3zM10 3h3v2h-3zM3 9h3v2H3zM10 9h3v2h-3z" strokeWidth=".8" />
      </svg>
      <span className="ml-[1px]"><Caret /></span>
    </div>
  );
}

function Viewport() {
  return (
    <div className="relative h-[821px] overflow-hidden">
      <Scene />
      <div className="relative flex h-full flex-col justify-between">
        <Browser />
        <div className="flex items-end pb-1">
          <div className="ml-[2px] flex h-[25px] w-[300px] items-center border border-t-0 border-[#c6c6c6] bg-[#f0f0f0] pt-[2px] pl-6">
            <span className="flex-1 font-['Roboto'] text-[11.5px] tracking-[-0.65px] text-[#666]">COMMENTS</span>
            <PanelHandle sign="plus" />
          </div>
          <div className="ml-[529px]"><NavBar /></div>
        </div>
      </div>
    </div>
  );
}

/* ------------------------------------------------------------------ */
/* Timeline                                                             */
/* ------------------------------------------------------------------ */

const TIMELINE: IconName[] = [
  "editSketch", "extrude", "editSketch", "extrude", "pattern", "shell", "editSketch", "extrude", "pattern", "fillet", "fillet",
  "editSketch", "editSketch", "editSketch", "revolve", "move", "copy", "move", "editSketch", "extrude", "fillet",
];

function Timeline() {
  return (
    <div className="flex h-[47px] border-t-2 border-[#c4c4c4] bg-[#f0f0f0]">
      <div className="flex w-[140px] items-center gap-[12.4px] pt-[2px] pl-[9px] text-[#3f3f3f]">
        <svg width="12" height="14" viewBox="0 0 12 14" fill="currentColor"><path d="M0 0h1.500v14H0zM12 .5v13L2 7z" /></svg>
        <svg width="13" height="14" viewBox="0 0 13 14" fill="currentColor"><path d="M9 .5v13L0 7zM11 4h2v6h-2z" /></svg>
        <svg width="12" height="16" viewBox="0 0 12 16" fill="currentColor"><path d="M0 0v16l12-8z" /></svg>
        <svg width="13" height="14" viewBox="0 0 13 14" fill="currentColor"><path d="M4 .5v13L13 7zM0 4h1v6H0zM2 4h1v6H2z" /></svg>
        <svg width="12" height="14" viewBox="0 0 12 14" fill="currentColor"><path d="M10.5 0H12v14h-1.500zM0 .5v13L10 7z" /></svg>
      </div>
      <div className="flex">
        {TIMELINE.map((n, i) => (
          <div key={i} className="flex w-6 flex-col items-center pt-[15px]">
            <Icon name={n} size={16} />
            <div className="mt-[3px] flex h-[7px] w-full">
              <div className={i === 0 ? "w-[12px]" : "w-[12px] border-b-2 border-[#c8c8c8]"} />
              <div className={i === 20 ? "w-[2px] bg-[#c8c8c8]" : "flex-1 border-b-2 border-l-2 border-[#c8c8c8]"} />
            </div>
          </div>
        ))}
      </div>
      <svg width="12" height="32" viewBox="0 0 12 32" className="mt-[9px] ml-[-6px]" fill="#5c5c5c"><path d="M0 0h12v4L7 9v23H5V9L0 4z" /></svg>
      <div className="mt-[16px] mr-[6px] ml-auto"><Gear color="#6c6c6c" /></div>
    </div>
  );
}

export default function App() {
  return (
    <div className="h-[1033px] w-[1911px] overflow-hidden font-['Liberation_Sans',sans-serif]">
      <TitleBar />
      <TabStrip />
      <Ribbon />
      <Banner />
      <Viewport />
      <Timeline />
    </div>
  );
}
